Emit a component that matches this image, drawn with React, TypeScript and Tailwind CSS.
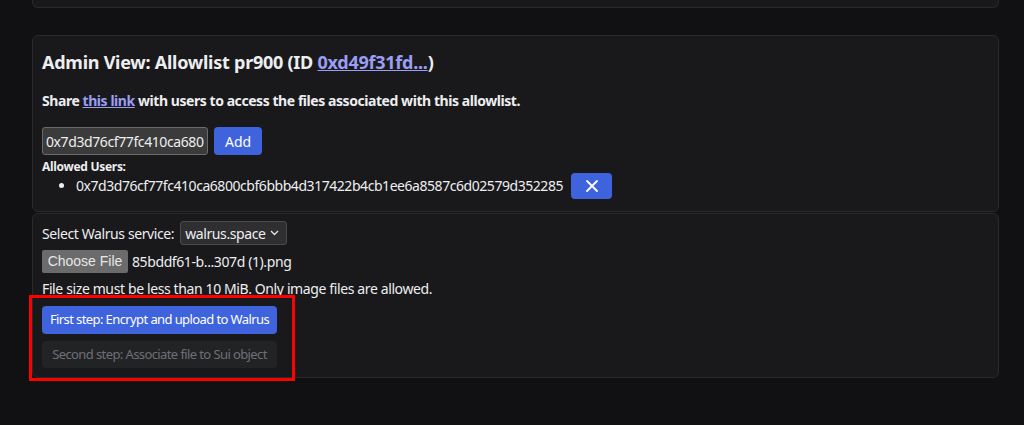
import React from 'react';

const font = { fontFamily: '"Noto Sans", "Open Sans", sans-serif' };

export default function App() {
  const allowed = ['0x7d3d76cf77fc410ca6800cbf6bbb4d317422b4cb1ee6a8587c6d02579d352285'];

  return (
    <div className="relative min-h-[425px] bg-[#111113] text-[#edeef0] overflow-hidden" style={font}>
      <div className="pl-[32px] pr-[25px]">
        {/* tail of the card above */}
        <div className="h-[8px] rounded-b-md border border-t-0 border-[#2a2a2e] bg-[#19191b]" />

        {/* Admin view card */}
        <div className="mt-[27px] rounded-md border border-[#2a2a2e] bg-[#19191b] px-[9px] pt-[12px] pb-[12px]">
          <h2 className="text-[18px] font-bold leading-[28px] tracking-[-0.25px]">
            Admin View: Allowlist pr900 (ID{' '}
            <a className="text-[#9b9ef5] underline">0xd49f31fd...</a>)
          </h2>
          <p className="mt-[15px] text-[14px] font-bold leading-[20px] tracking-[-0.44px]">
            Share <a className="text-[#9b9ef5] underline">this link</a> with users to access the files
            associated with this allowlist.
          </p>
          <div className="mt-[16px] flex items-center gap-[6px]">
            <input
              readOnly
              value="0x7d3d76cf77fc410ca6800cbf6bbb4d317422b4cb1ee6a8587c6d02579d352285"
              className="h-[28px] w-[166px] rounded-[3px] border border-[#6a6a6a] bg-[#3b3b3b] px-[3px] text-[14px] tracking-[-0.4px] text-[#edeef0] outline-none"
              style={font}
            />
            <button className="h-[28px] rounded-[4px] bg-[#3e63dd] px-[11px] text-[14px] text-white">Add</button>
          </div>
          <h4 className="mt-[4px] text-[12px] font-bold leading-[16px] tracking-[-0.3px]">Allowed Users:</h4>
          <ul className="-mt-[2px] list-disc pl-[34px]">
            {allowed.map((a) => (
              <li key={a} className="text-[14px] leading-[26px]">
                <div className="flex items-center gap-[8px]">
                  <span className="tracking-[-0.45px]">{a}</span>
                  <button className="flex h-[26px] w-[41px] items-center justify-center rounded-[4px] bg-[#3e63dd] text-white">
                    <svg width="14" height="14" viewBox="0 0 14 14" fill="none" stroke="currentColor" strokeWidth="1.8" strokeLinecap="round">
                      <path d="M2 2L12 12M12 2L2 12" />
                    </svg>
                  </button>
                </div>
              </li>
            ))}
          </ul>
        </div>

        {/* Upload card */}
        <div className="mt-[1px] rounded-md border border-[#2a2a2e] bg-[#19191b] px-[9px] pt-[7px] pb-[9px]">
          <div className="flex items-center gap-[6px] text-[14px] tracking-[-0.4px]">
            <span>Select Walrus service:</span>
            <div className="flex h-[24px] w-[107px] items-center justify-between rounded-[3px] border border-[#4a4a4a] bg-[#2f2f31] pl-[4px] pr-[7px]">
              <span className="text-[14px]">walrus.space</span>
              <svg width="9" height="6" viewBox="0 0 9 6" fill="none" stroke="#e0e0e0" strokeWidth="1.4">
                <path d="M1 1L4.5 4.5L8 1" />
              </svg>
            </div>
          </div>
          <div className="mt-[5px] flex items-center gap-[4px] text-[14px]">
            <button
              className="h-[23px] w-[86px] rounded-[2px] bg-[#6b6b6b] text-[14px] text-[#e6e6e6]"
              style={{ fontFamily: '"Liberation Sans", Arial, sans-serif' }}
            >
              Choose File
            </button>
            <span className="tracking-[-0.4px]">85bddf61-b...307d (1).png</span>
          </div>
          <p className="mt-[6px] text-[14px] leading-[20px] tracking-[-0.38px]">
            File size must be less than 10 MiB. Only image files are allowed.
          </p>
          <div className="mt-[7px] flex flex-col items-start gap-[7px]">
            <button className="h-[28px] w-[235px] whitespace-nowrap rounded-[4px] bg-[#3e63dd] text-[13px] tracking-[-0.6px] text-white">
              First step: Encrypt and upload to Walrus
            </button>
            <button disabled className="h-[27px] w-[235px] whitespace-nowrap rounded-[4px] bg-[#222325] text-[13px] tracking-[-0.6px] text-[#6e6f76]">
              Second step: Associate file to Sui object
            </button>
          </div>
        </div>
      </div>

      {/* annotation box */}
      <div className="pointer-events-none absolute left-[29px] top-[295px] h-[86px] w-[266px] border-[3px] border-[#ff0000]" />
    </div>
  );
}
